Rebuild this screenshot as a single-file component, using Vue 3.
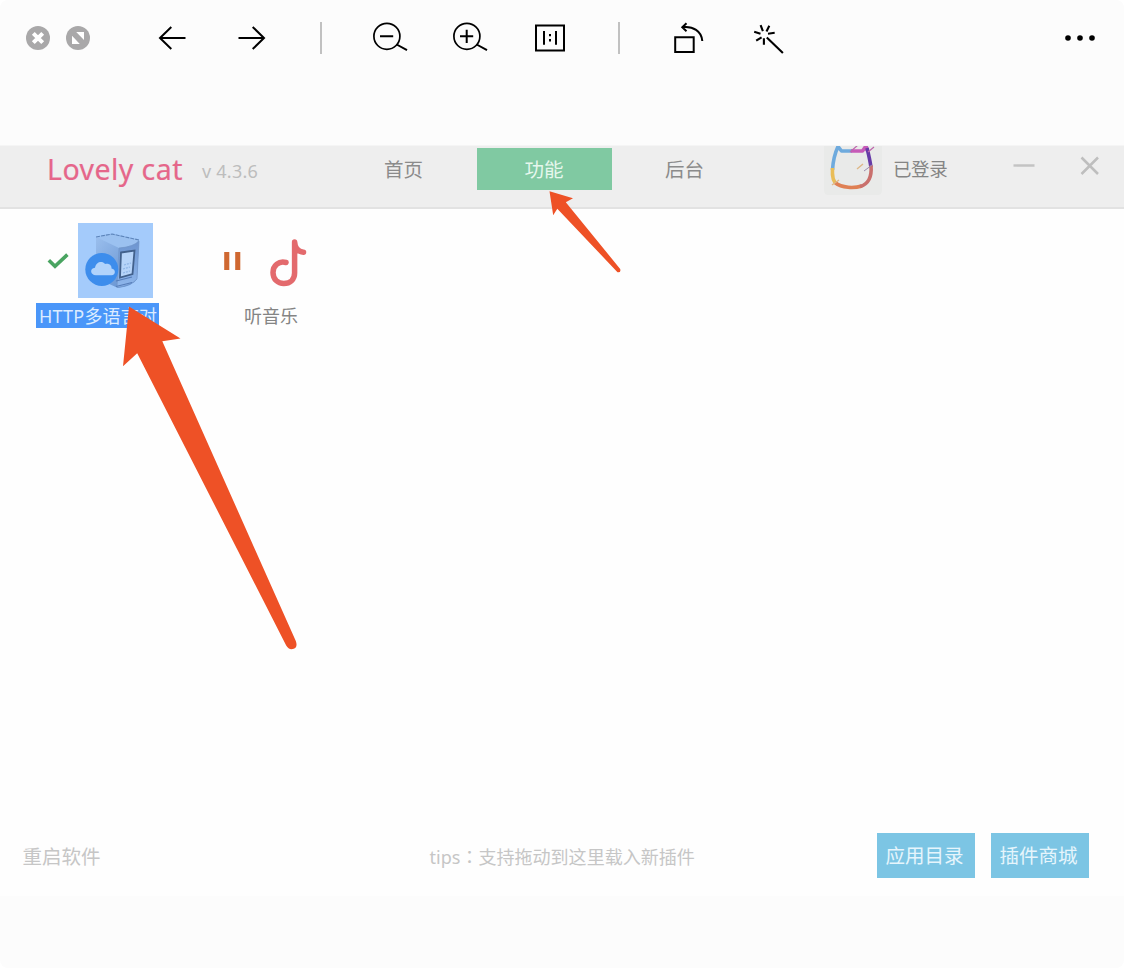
<script setup>
const tabs = [
  { label: '首页', active: false },
  { label: '功能', active: true },
  { label: '后台', active: false },
]
const actions = ['应用目录', '插件商城']
</script>

<template>
  <div class="viewer">
    <div class="toolbar">
      <svg class="dot" viewBox="0 0 24 24">
        <circle cx="12" cy="12" r="12" fill="#a9a8a9" />
        <path d="M7.3 7.3 16.7 16.7M16.7 7.3 7.3 16.7" stroke="#fff" stroke-width="4" />
      </svg>
      <svg class="dot second" viewBox="0 0 24 24">
        <circle cx="12" cy="12" r="12" fill="#a9a8a9" />
        <path d="M10.2 6H18V14ZM6 9.8 13.8 18H6Z" fill="#fff" />
      </svg>
      <svg class="icon back" viewBox="0 0 40 40">
        <path d="M33.5 20H7.5M19.3 9 8 20 19.3 31" />
      </svg>
      <svg class="icon next" viewBox="0 0 40 40">
        <path d="M6.5 20H32.5M20.7 9 32 20 20.7 31" />
      </svg>
      <span class="divider"></span>
      <svg class="icon zoom" viewBox="0 0 40 40">
        <circle cx="16.9" cy="18.3" r="13" stroke-width="1.7" />
        <path d="M10 18.3H23.2M26.7 26.5 37 32.2" />
      </svg>
      <svg class="icon next" viewBox="0 0 40 40">
        <circle cx="16.9" cy="18.3" r="13" stroke-width="1.7" />
        <path d="M10 18.3H23.2M16.7 11.7V25M26.7 26.5 37 32.2" />
      </svg>
      <svg class="icon next" viewBox="0 0 40 40">
        <path d="M6 7.5H34V32.5H6ZM14 13V26.7M26 13V26.7" />
        <path d="M19 16H21V18.2H19ZM19 21H21V23.4H19Z" fill="#000" stroke="none" />
      </svg>
      <span class="divider"></span>
      <svg class="icon rotate" viewBox="0 0 40 40">
        <path d="M7.2 19.2H25.7V34H7.2ZM14.5 9.3C25 8 33.5 13 34.3 23M18.5 5.3 14.3 9.3 18.5 13.3" />
      </svg>
      <svg class="icon next" viewBox="0 0 40 40">
        <path stroke-width="2.1" d="M18.8 19.5 34.9 35M15.9 20.3V26.8M12.6 7.2 14.9 13.2M21.3 7.8 18.5 13.5M6.2 13.8 12.5 15.7M20 15.7 26.7 14.8M8.2 22.7 13.6 19.3" />
      </svg>
      <svg class="icon more" viewBox="0 0 40 40">
        <g fill="#000" stroke="none">
          <circle cx="8" cy="20" r="2.8" /><circle cx="20" cy="20" r="2.8" /><circle cx="32" cy="20" r="2.8" />
        </g>
      </svg>
    </div>

    <div class="app">
      <header class="header">
        <span class="brand">Lovely cat</span>
        <span class="version">v 4.3.6</span>
        <nav class="tabs">
          <span v-for="t in tabs" :key="t.label" class="tab" :class="{ active: t.active }">{{ t.label }}</span>
        </nav>
        <svg class="avatar" viewBox="0 0 58 49">
          <path d="M0 0H58V44Q58 49 53 49H5Q0 49 0 44Z" fill="#e9eae9" />
          <g fill="none" stroke-width="3.6" stroke-linejoin="round">
            <path d="M8.5 24C9 15 11 7 14 .5L17.5 5H28" stroke="#6eaadd" />
            <path d="M27 5H38.5L42 0 43.5 5" stroke="#c65bb8" />
            <path d="M43 2C44.5 8 46 14 46.9 21" stroke="#663ca7" />
            <path d="M8.5 22C8 30 9 36 13 38" stroke="#e9bd58" />
            <path d="M11 36.5C18 42.3 30 42.3 38 40" stroke="#df8054" />
            <path d="M36 40.5C45 38 48 31 47 19.5" stroke="#c9706d" />
          </g>
          <path d="M26 6 34 -1M44 6 50 1" stroke="#bd66ac" stroke-width="1.2" />
          <path d="M33 23 39 18M8 39 15 34" stroke="#deb888" stroke-width="1.4" />
          <path d="M40 25 48 19" stroke="#998cae" stroke-width="1" />
        </svg>
        <span class="login">已登录</span>
        <svg class="minimize" viewBox="0 0 22 20"><path d="M.5 9.5H21.5" /></svg>
        <svg class="close" viewBox="0 0 20 20"><path d="M1.5 1.5 18 18M18 1.5 1.5 18" /></svg>
      </header>

      <main class="plugins">
        <div class="plugin">
          <div class="visual">
            <svg class="check" viewBox="0 0 22 16"><path d="M1.8 7.2 8 13.2 20.4 1.6" fill="none" stroke="#49a461" stroke-width="3.6" /></svg>
            <svg class="server" viewBox="0 0 75 75">
              <defs>
                <linearGradient id="side" x1="0" y1="0" x2="1" y2="1">
                  <stop offset="0" stop-color="#9cc0ee" /><stop offset="1" stop-color="#5c8acb" />
                </linearGradient>
                <linearGradient id="face" x1="0" y1="0" x2="0" y2="1">
                  <stop offset="0" stop-color="#6c94cf" /><stop offset="1" stop-color="#8fb7ec" />
                </linearGradient>
              </defs>
              <rect width="75" height="75" fill="#a4cbfb" />
              <path d="M18 14 34 11 61 17 59 56Q55 63 40 65L18 55Z" fill="url(#side)" />
              <path d="M18 14 34 11 61 17Q57 23 41 25Z" fill="#9bc1f0" />
              <path d="M18 14 34 11 61 17" fill="none" stroke="#5c84ba" stroke-width="1.1" stroke-dasharray="4 1" />
              <path d="M41 25Q56 24 61 18L59 56Q54 62 39 64.5Z" fill="url(#face)" stroke="#7396c8" stroke-width=".7" />
              <path d="M43 29.5 56.5 27.5 54.5 51 42 54.5Z" fill="#b6d4f9" stroke="#42618c" stroke-width="1.8" />
              <path d="M46 42 53 40M45 46 52 44M45 50 52 48" stroke="#8fb5e6" stroke-width="1.3" stroke-dasharray="2 1" />
              <path d="M38 58 54 54M38 63.5 54 59.5" stroke="#567db8" stroke-width="1.2" />
              <circle cx="23.8" cy="46.4" r="16.5" fill="#3d8dec" />
              <path d="M18 52.3C12 52.3 11.5 45 17 44.8C18 39 24 37.4 27 41C31 39.7 34 42.5 33.5 45.5C38 46 38 52.3 33.5 52.3Z" fill="#b1d3fb" />
            </svg>
          </div>
          <span class="name selected">HTTP多语言对</span>
        </div>
        <div class="plugin second-plugin">
          <div class="visual">
            <svg class="pause" viewBox="0 0 18 20"><path d="M.2 1H5.3V19H.2ZM11.2 1H16.3V19H11.2Z" fill="#cf6831" /></svg>
            <svg class="note" viewBox="0 0 38 50">
              <path d="M17 24.5C10 22.5 4 27.5 4 34.5C4 41.5 9 45.5 14.8 45.5C21 45.5 25.6 41.5 25.6 35V4C26 10 29 14 34.5 14.2" fill="none" stroke="#e36a6d" stroke-width="5.5" stroke-linecap="round" stroke-linejoin="round" />
            </svg>
          </div>
          <span class="name">听音乐</span>
        </div>
      </main>

      <footer class="footer">
        <span class="restart">重启软件</span>
        <span class="tips">tips<span class="colon">：</span>支持拖动到这里载入新插件</span>
        <div class="actions">
          <span v-for="a in actions" :key="a" class="action">{{ a }}</span>
        </div>
      </footer>
    </div>

    <svg class="annotations" viewBox="0 0 1124 968">
      <path d="M129 306.5 180.5 338.5 162.3 341.3 295.8 641Q298.5 649 291.5 649.2Q288.3 649.2 286.2 645.5L137.2 353.2 123 366.3Z" />
      <path d="M549.5 191.3 573 198.3 565.8 202.2 620.2 269Q621.2 272.8 617.5 272.2L557.3 208.8 553.2 215.3Z" />
    </svg>
  </div>
</template>

<style>
body { margin: 0; background: #fff; }
</style>

<style scoped>
.viewer {
  position: relative;
  width: 1124px;
  height: 968px;
  overflow: hidden;
  border-radius: 8px;
  background: #fcfcfc;
  font-family: "Noto Sans", "Noto Sans CJK SC", sans-serif;
}
svg { display: block; flex: none; }
span { white-space: nowrap; }
.toolbar { display: flex; align-items: center; height: 76px; padding-left: 26px; box-sizing: border-box; }
.dot { width: 24px; height: 24px; }
.second { margin-left: 16px; }
.icon { width: 40px; height: 40px; fill: none; stroke: #000; stroke-width: 2; }
.back { margin-left: 62px; }
.next { margin-left: 40px; }
.divider { width: 2px; height: 32px; margin-left: 48px; background: #c1c1c1; }
.zoom, .rotate { margin-left: 48px; }
.more { margin-left: 272px; }

.app { display: flex; flex-direction: column; height: 751px; margin-top: 69px; background: #fefefe; }
.header {
  display: flex;
  align-items: flex-start;
  height: 64px;
  box-sizing: border-box;
  border-top: 1px solid #f5f5f5;
  border-bottom: 2px solid #e2e2e2;
  background: #eee;
}
.brand { width: 155px; margin-left: 47px; line-height: 47px; font-size: 28.5px; color: #e5668a; letter-spacing: 0.45px; -webkit-text-stroke: 0.2px #e5668a; }
.version { width: 134px; line-height: 51px; font-size: 18px; color: #bdbdbd; letter-spacing: 0.25px; }
.tabs { display: flex; gap: 5.5px; margin-top: 2px; }
.tab { width: 135px; height: 42px; line-height: 43px; text-align: center; font-size: 19.5px; color: #8b8b8b; }
.active { background: #80c9a2; color: #e6f7ed; }
.avatar { width: 58px; height: 49px; margin-left: 72px; }
.login { width: 108px; margin-left: 11px; line-height: 46px; font-size: 18.5px; letter-spacing: -0.4px; color: #858585; }
.minimize { width: 22px; height: 20px; margin-left: 12px; margin-top: 10px; fill: none; stroke: #c3c3c3; stroke-width: 2.4; }
.close { width: 20px; height: 20px; margin-left: 45px; margin-top: 9.5px; fill: none; stroke: #bebebe; stroke-width: 2.5; }

.plugins { display: flex; flex: 1; padding: 14px 0 0 36px; }
.plugin { display: flex; flex-direction: column; align-items: flex-start; width: 123px; }
.visual { display: flex; height: 75px; }
.check { width: 22px; height: 16px; margin: 30px 0 0 11px; }
.server { width: 75px; height: 75px; margin-left: 9px; }
.name { height: 25px; margin-top: 5px; line-height: 26px; font-size: 18px; color: #848484; }
.selected { width: 123px; box-sizing: border-box; padding-left: 3px; background: #4a96f9; color: #dcecff; letter-spacing: 0.2px; }
.second-plugin { margin-left: 65px; }
.pause { width: 18px; height: 20px; margin-top: 28px; }
.note { width: 38px; height: 50px; margin: 15px 0 0 27px; }
.second-plugin .name { margin-left: 20px; }

.footer { display: flex; height: 63px; align-items: flex-start; }
.restart { width: 407px; margin-left: 22.5px; line-height: 47px; font-size: 19.5px; color: #c6c6c6; }
.tips { width: 447px; line-height: 46px; font-size: 18.05px; color: #c6c6c6; }
.colon { font-family: "Noto Sans CJK TC", sans-serif; }
.actions { display: flex; gap: 16px; }
.action { width: 98px; height: 45px; line-height: 46px; text-align: center; font-size: 19.5px; color: #e6f5fc; background: #7cc5e4; text-indent: -2px; }

.annotations { position: absolute; left: 0; top: 0; width: 1124px; height: 968px; fill: #ee5126; pointer-events: none; }
</style>
